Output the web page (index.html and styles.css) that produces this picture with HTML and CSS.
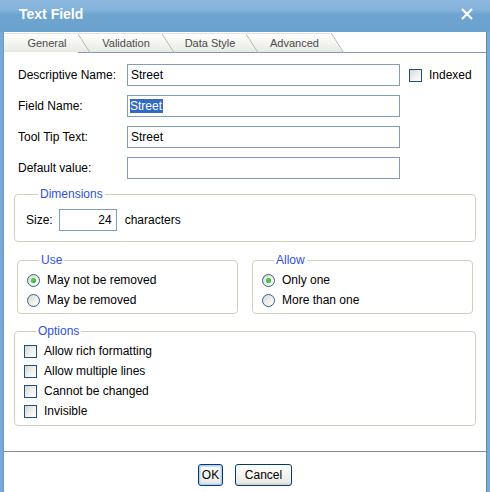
FILE: index.html
```html
<!DOCTYPE html>
<html>
<head>
<meta charset="utf-8">
<link rel="stylesheet" href="styles.css">
</head>
<body>
<div class="win">
  <div class="titlebar">
    <span class="title">Text Field</span>
    <svg class="close" width="12" height="12" viewBox="0 0 12 12"><path d="M1 1 L11 11 M11 1 L1 11" stroke="#fff" stroke-width="2.2" fill="none"/></svg>
  </div>
  <div class="frame">
    <div class="client">
      <div class="tabstrip">
        <div class="tab sel t1">General</div>
        <div class="tab t2">Validation</div>
        <div class="tab t3">Data Style</div>
        <div class="tab t4 last">Advanced</div>
        <div class="tab-end"></div>
        <div class="tab-fill"></div>
      </div>
      <div class="body">
        <div class="form">
          <label class="lbl">Descriptive Name:</label>
          <div class="input">Street</div>
          <div class="chk-row"><span class="cbox"></span><span>Indexed</span></div>

          <label class="lbl">Field Name:</label>
          <div class="input"><span class="selected">Street</span></div>
          <div></div>

          <label class="lbl">Tool Tip Text:</label>
          <div class="input">Street</div>
          <div></div>

          <label class="lbl">Default value:</label>
          <div class="input"></div>
          <div></div>
        </div>

        <fieldset class="group dims">
          <legend>Dimensions</legend>
          <div class="size-row">
            <span>Size:</span>
            <div class="input small">24</div>
            <span>characters</span>
          </div>
        </fieldset>

        <div class="pair">
          <fieldset class="group half">
            <legend>Use</legend>
            <div class="opt"><span class="radio on"></span><span>May not be removed</span></div>
            <div class="opt"><span class="radio"></span><span>May be removed</span></div>
          </fieldset>
          <fieldset class="group half">
            <legend>Allow</legend>
            <div class="opt"><span class="radio on"></span><span>Only one</span></div>
            <div class="opt"><span class="radio"></span><span>More than one</span></div>
          </fieldset>
        </div>

        <fieldset class="group options">
          <legend>Options</legend>
          <div class="opt"><span class="cbox"></span><span>Allow rich formatting</span></div>
          <div class="opt"><span class="cbox"></span><span>Allow multiple lines</span></div>
          <div class="opt"><span class="cbox"></span><span>Cannot be changed</span></div>
          <div class="opt"><span class="cbox"></span><span>Invisible</span></div>
        </fieldset>
      </div>
      <div class="sep"></div>
      <div class="buttons">
        <button class="btn ok">OK</button>
        <button class="btn cancel">Cancel</button>
      </div>
    </div>
  </div>
</div>
</body>
</html>
```

FILE: styles.css
```css
* { box-sizing: border-box; }
html, body { margin: 0; padding: 0; }
body {
  width: 490px;
  height: 492px;
  overflow: hidden;
  font-family: "Liberation Sans", Arial, sans-serif;
  font-size: 12px;
  color: #000;
  background: #79aad6;
}
.win { display: flex; flex-direction: column; height: 492px; }
.titlebar {
  height: 32px;
  flex: none;
  display: flex;
  align-items: center;
  justify-content: space-between;
  padding: 0 17px 4px 19px;
  background: linear-gradient(#8cb8de 0%, #85b3db 30%, #6ea5d0 45%, #6aa2ce 100%);
}
.title { color: #fff; font-weight: bold; font-size: 14px; }
.close { display: block; }
.frame {
  flex: 1;
  display: flex;
  padding: 0 3px 0 3px;
  background: #79aad6;
}
.client {
  flex: 1;
  background: #fff;
  border-left: 1px solid #6a97c4;
  border-right: 1px solid #5d88b6;
  display: flex;
  flex-direction: column;
}
.tabstrip {
  height: 21px;
  display: flex;
  padding-top: 1px;
  flex: none;
}
.tab {
  position: relative;
  height: 20px;
  margin-right: -12px;
  display: flex;
  align-items: center;
  justify-content: center;
  font-size: 11px;
  color: #4a4a4a;
  background: linear-gradient(#ffffff 0%, #f6f6f3 40%, #e8e8e3 100%);
  border-bottom: 1px solid #8198b8;
  border-top: 1px solid #e4e4dc;
  clip-path: polygon(0 0, calc(100% - 13px) 0, 100% 100%, 0 100%);
  padding-bottom: 1px;
}
.tab.sel { border-bottom-color: transparent; }
.t1 { width: 86px; }
.t2 { width: 96px; }
.t3 { width: 96px; }
.t4 { width: 97px; }
.tab + .tab::before, .tab-end::before {
  content: "";
  position: absolute;
  left: 0;
  top: 0;
  width: 13px;
  height: 20px;
  background: linear-gradient(to top right, transparent calc(50% - 0.8px), #b7b7ab 50%, transparent calc(50% + 0.8px));
}
.tab-end {
  position: relative;
  width: 14px;
  height: 20px;
  flex: none;
  border-bottom: 1px solid #8198b8;
}
.tab-fill { flex: 1; border-bottom: 1px solid #8198b8; height: 20px; }

.body { padding: 11px 10px 0 10px; flex: none; }
.form {
  display: grid;
  grid-template-columns: 109px 273px auto;
  grid-auto-rows: 22px;
  row-gap: 9px;
  margin-left: 4px;
  align-items: center;
}
.lbl { line-height: 22px; }
.input {
  height: 22px;
  border: 1px solid #7f9db9;
  padding: 0 3px;
  line-height: 20px;
  background: #fff;
  white-space: nowrap;
}
.selected { background: #316ac5; color: #fff; display: inline-block; line-height: 14px; padding: 0 1px 0 0; margin-left: -1px; }
.chk-row { display: flex; align-items: center; gap: 7px; margin-left: 9px; }
.cbox {
  width: 13px;
  height: 13px;
  flex: none;
  border: 1px solid #1c5180;
  background: linear-gradient(135deg, #d8d8d2 0%, #f2f2ef 60%, #ffffff 100%);
}
.radio {
  width: 13px;
  height: 13px;
  flex: none;
  border: 1px solid #385f88;
  border-radius: 50%;
  background: linear-gradient(135deg, #d5d5cf 0%, #f2f2ef 60%, #ffffff 100%);
  display: flex;
  align-items: center;
  justify-content: center;
}
.radio.on::after {
  content: "";
  width: 5px;
  height: 5px;
  border-radius: 50%;
  background: radial-gradient(circle at 40% 40%, #5fd35f, #1f9a1f);
}
.group {
  margin: 0;
  padding: 0;
  border: 1px solid #d0d0bf;
  border-radius: 4px;
  min-width: 0;
}
.group legend {
  margin-left: 12px;
  padding: 0 2px;
  color: #2f50e0;
  line-height: 14px;
  font-size: 12px;
}
.dims { margin-top: 8px; padding: 8px 0 10px 11px; }
.size-row { display: flex; align-items: center; }
.input.small { width: 58px; text-align: right; margin: 0 8px 0 6px; padding-right: 4px; }
.pair { display: flex; gap: 14px; padding: 0 3px; margin-top: 11px; }
.half { flex: 1; padding: 3px 0 3px 9px; }
.opt { display: flex; align-items: center; gap: 7px; height: 20px; }
.options { margin-top: 10px; padding: 3px 0 4px 9px; }
.sep { height: 1px; background: #8c8c8c; margin-top: 25px; flex: none; }
.buttons { display: flex; justify-content: center; gap: 12px; margin-top: 12px; }
.btn {
  height: 22px;
  font-family: "Liberation Sans", Arial, sans-serif;
  font-size: 12px;
  color: #000;
  border: 1px solid #003c74;
  border-radius: 3px;
  background: linear-gradient(#ffffff 0%, #f4f4f0 50%, #ecebe6 85%, #d6d0c5 100%);
  padding: 0;
}
.ok { width: 25px; box-shadow: inset 0 0 0 1px #b3cdf4, inset 0 0 0 2px #cfe0f8; }
.cancel { width: 57px; }
```
